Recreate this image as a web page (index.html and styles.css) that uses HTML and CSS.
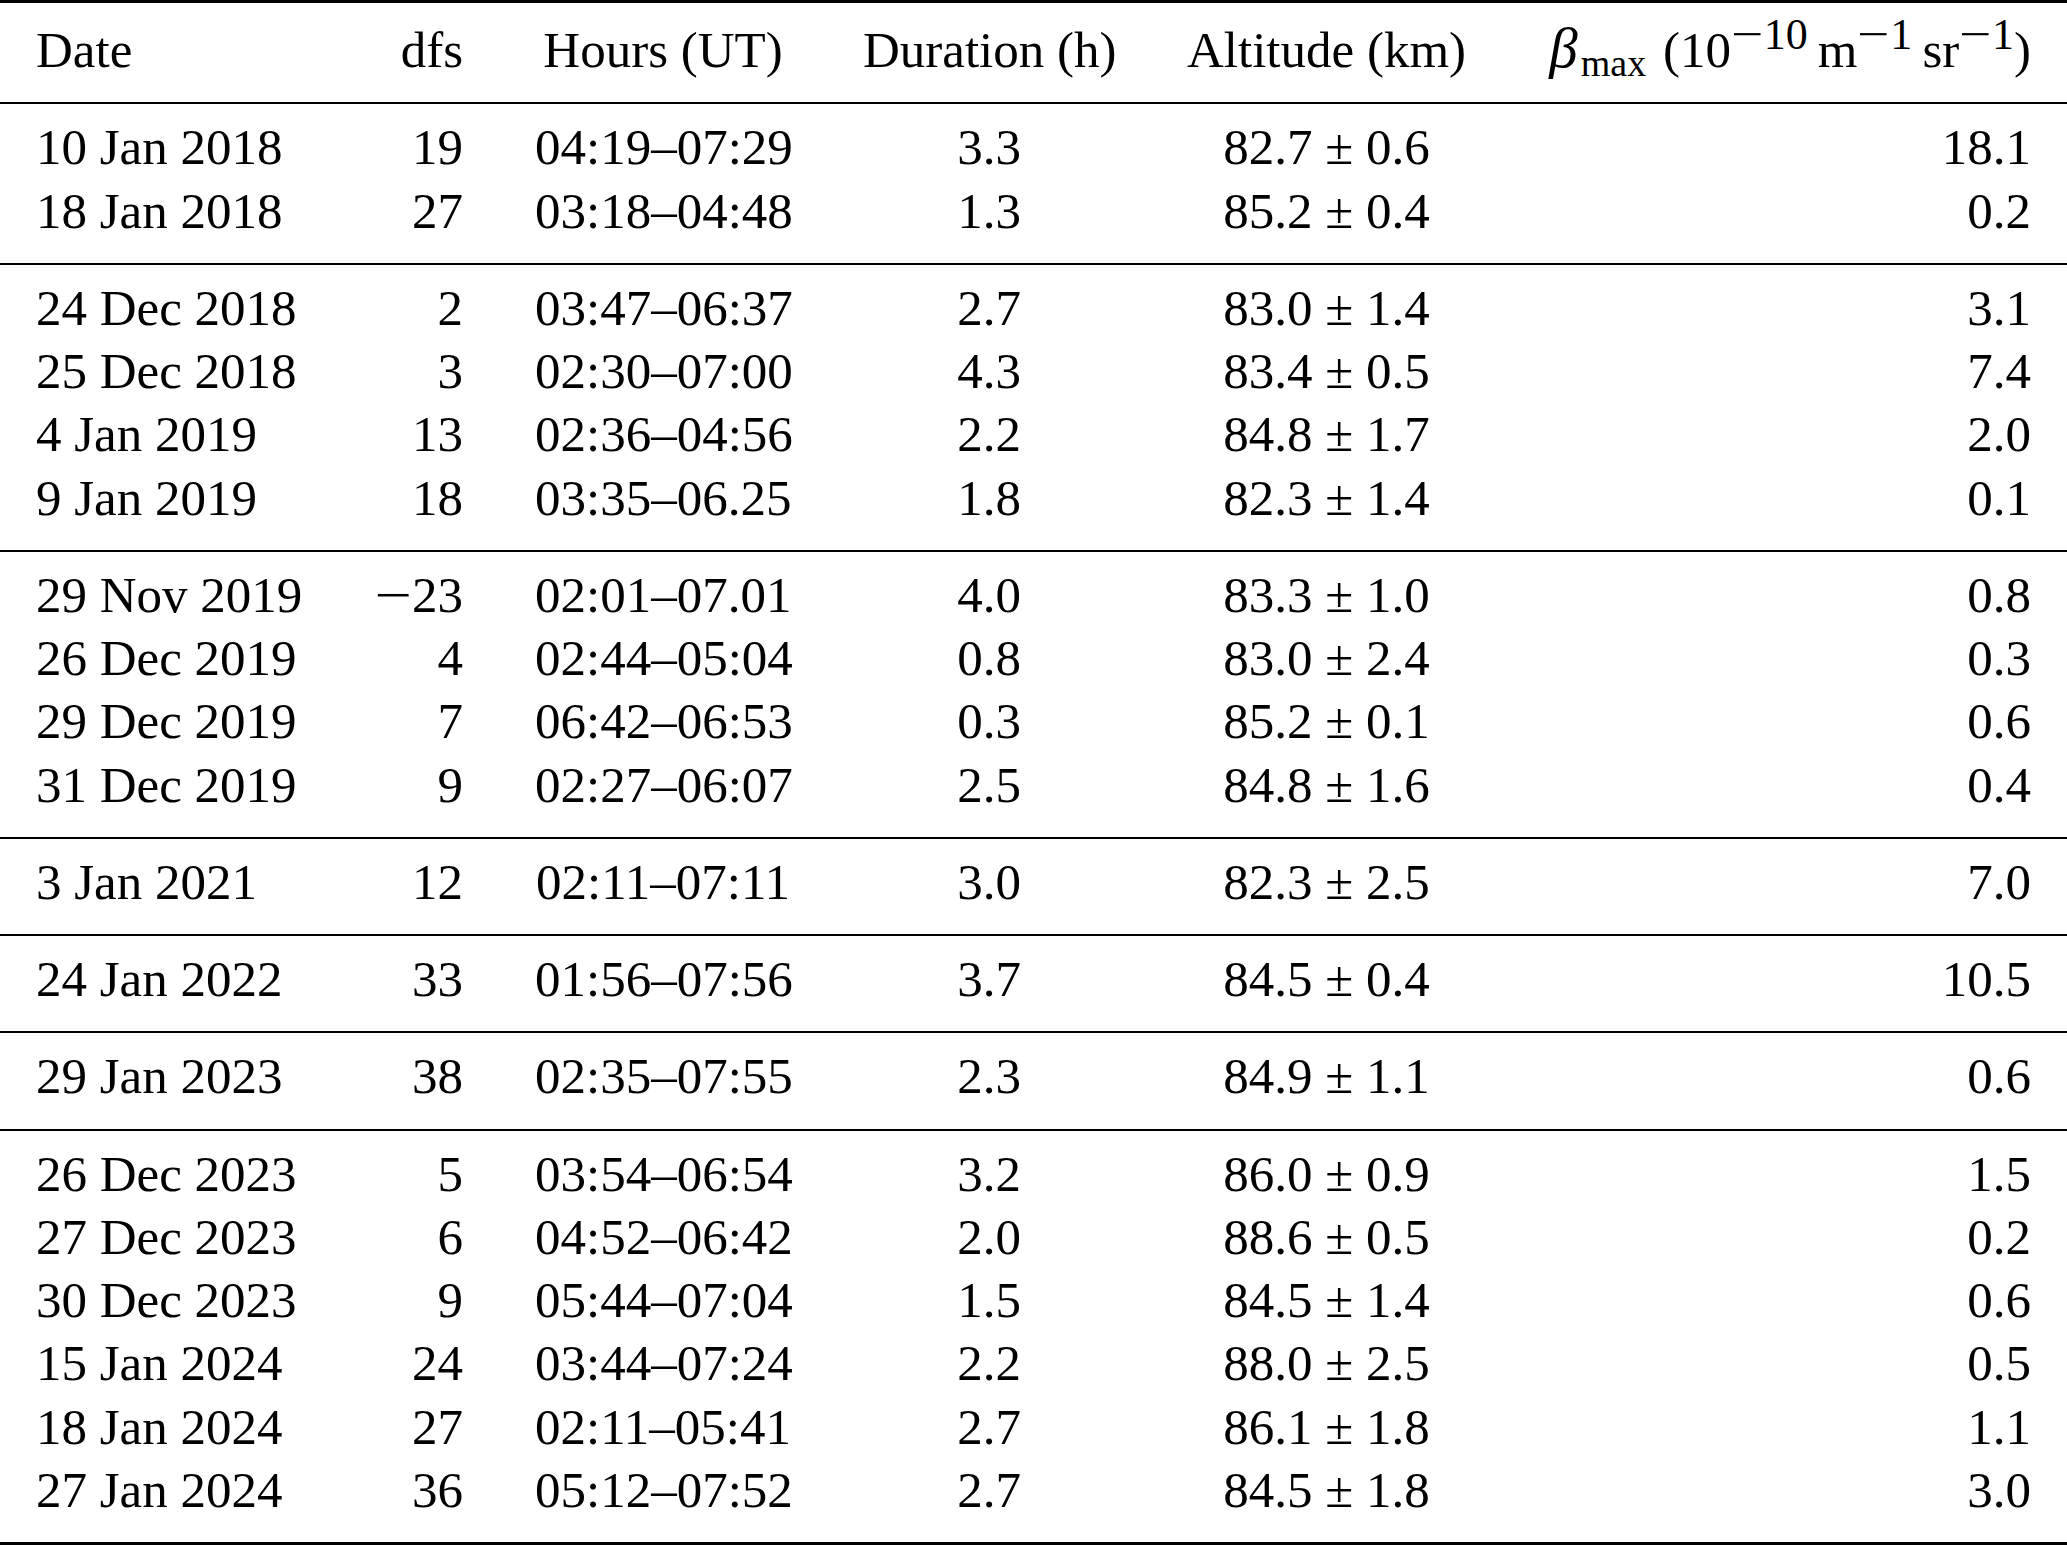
FILE: index.html
```html
<!DOCTYPE html>
<html lang="en">
<head>
<meta charset="utf-8">
<title>Table</title>
<link rel="stylesheet" href="styles.css">
</head>
<body>
<table class="data">
  <colgroup>
    <col class="c-date"><col class="c-dfs"><col class="c-hours"><col class="c-dur"><col class="c-alt"><col class="c-beta">
  </colgroup>
  <thead>
    <tr>
      <th class="l">Date</th>
      <th class="r">dfs</th>
      <th class="c">Hours (UT)</th>
      <th class="c">Duration (h)</th>
      <th class="c">Altitude (km)</th>
      <th class="r"><i class="beta">β</i><sub>max</sub> <span class="paren">(</span>10<sup><span class="minus">−</span>10</sup><span class="thin"></span>m<sup><span class="minus">−</span>1</sup><span class="thin"></span>sr<sup><span class="minus">−</span>1</sup>)</th>
    </tr>
  </thead>
  <tbody>
    <tr><td class="l">10 Jan 2018</td><td class="r">19</td><td class="c">04:19–07:29</td><td class="c">3.3</td><td class="c">82.7 ± 0.6</td><td class="r">18.1</td></tr>
    <tr><td class="l">18 Jan 2018</td><td class="r">27</td><td class="c">03:18–04:48</td><td class="c">1.3</td><td class="c">85.2 ± 0.4</td><td class="r">0.2</td></tr>
  </tbody>
  <tbody>
    <tr><td class="l">24 Dec 2018</td><td class="r">2</td><td class="c">03:47–06:37</td><td class="c">2.7</td><td class="c">83.0 ± 1.4</td><td class="r">3.1</td></tr>
    <tr><td class="l">25 Dec 2018</td><td class="r">3</td><td class="c">02:30–07:00</td><td class="c">4.3</td><td class="c">83.4 ± 0.5</td><td class="r">7.4</td></tr>
    <tr><td class="l">4 Jan 2019</td><td class="r">13</td><td class="c">02:36–04:56</td><td class="c">2.2</td><td class="c">84.8 ± 1.7</td><td class="r">2.0</td></tr>
    <tr><td class="l">9 Jan 2019</td><td class="r">18</td><td class="c">03:35–06.25</td><td class="c">1.8</td><td class="c">82.3 ± 1.4</td><td class="r">0.1</td></tr>
  </tbody>
  <tbody>
    <tr><td class="l">29 Nov 2019</td><td class="r"><span class="minus">−</span>23</td><td class="c">02:01–07.01</td><td class="c">4.0</td><td class="c">83.3 ± 1.0</td><td class="r">0.8</td></tr>
    <tr><td class="l">26 Dec 2019</td><td class="r">4</td><td class="c">02:44–05:04</td><td class="c">0.8</td><td class="c">83.0 ± 2.4</td><td class="r">0.3</td></tr>
    <tr><td class="l">29 Dec 2019</td><td class="r">7</td><td class="c">06:42–06:53</td><td class="c">0.3</td><td class="c">85.2 ± 0.1</td><td class="r">0.6</td></tr>
    <tr><td class="l">31 Dec 2019</td><td class="r">9</td><td class="c">02:27–06:07</td><td class="c">2.5</td><td class="c">84.8 ± 1.6</td><td class="r">0.4</td></tr>
  </tbody>
  <tbody>
    <tr><td class="l">3 Jan 2021</td><td class="r">12</td><td class="c">02:11–07:11</td><td class="c">3.0</td><td class="c">82.3 ± 2.5</td><td class="r">7.0</td></tr>
  </tbody>
  <tbody>
    <tr><td class="l">24 Jan 2022</td><td class="r">33</td><td class="c">01:56–07:56</td><td class="c">3.7</td><td class="c">84.5 ± 0.4</td><td class="r">10.5</td></tr>
  </tbody>
  <tbody>
    <tr><td class="l">29 Jan 2023</td><td class="r">38</td><td class="c">02:35–07:55</td><td class="c">2.3</td><td class="c">84.9 ± 1.1</td><td class="r">0.6</td></tr>
  </tbody>
  <tbody class="last">
    <tr><td class="l">26 Dec 2023</td><td class="r">5</td><td class="c">03:54–06:54</td><td class="c">3.2</td><td class="c">86.0 ± 0.9</td><td class="r">1.5</td></tr>
    <tr><td class="l">27 Dec 2023</td><td class="r">6</td><td class="c">04:52–06:42</td><td class="c">2.0</td><td class="c">88.6 ± 0.5</td><td class="r">0.2</td></tr>
    <tr><td class="l">30 Dec 2023</td><td class="r">9</td><td class="c">05:44–07:04</td><td class="c">1.5</td><td class="c">84.5 ± 1.4</td><td class="r">0.6</td></tr>
    <tr><td class="l">15 Jan 2024</td><td class="r">24</td><td class="c">03:44–07:24</td><td class="c">2.2</td><td class="c">88.0 ± 2.5</td><td class="r">0.5</td></tr>
    <tr><td class="l">18 Jan 2024</td><td class="r">27</td><td class="c">02:11–05:41</td><td class="c">2.7</td><td class="c">86.1 ± 1.8</td><td class="r">1.1</td></tr>
    <tr><td class="l">27 Jan 2024</td><td class="r">36</td><td class="c">05:12–07:52</td><td class="c">2.7</td><td class="c">84.5 ± 1.8</td><td class="r">3.0</td></tr>
  </tbody>
</table>
</body>
</html>
```
FILE: styles.css
```css
html, body {
  margin: 0;
  padding: 0;
  background: #ffffff;
}

body {
  font-family: "Liberation Serif", "Times New Roman", serif;
  color: #000000;
}

.data {
  border-collapse: separate;
  border-spacing: 0;
  table-layout: fixed;
  width: 2067px;
  font-size: 51px;
  line-height: 63.25px;
}

.c-date { width: 338px; }
.c-dfs { width: 161px; }
.c-hours { width: 328px; }
.c-dur { width: 324px; }
.c-alt { width: 351px; }
.c-beta { width: 565px; }

.data th,
.data td {
  padding: 0 36px;
  white-space: nowrap;
  vertical-align: baseline;
  font-weight: normal;
}

.data th {
  border-top: 3px solid #000;
  border-bottom: 2px solid #000;
  padding-top: 16px;
  padding-bottom: 20px;
}

.data tbody tr:first-child td {
  padding-top: 12px;
}

.data tbody tr:last-child td {
  padding-bottom: 20px;
}

.data tbody + tbody tr:first-child td {
  border-top: 2px solid #000;
}

.data tbody.last tr:last-child td {
  border-bottom: 3px solid #000;
}

.l { text-align: left; }
.r { text-align: right; }
.c { text-align: center; }

.beta {
  font-style: italic;
  font-size: 57px;
  line-height: 0;
  margin: 0 3px 0 6px;
}

.paren {
  margin-left: 4px;
}

sub {
  font-size: 38px;
  line-height: 0;
  vertical-align: -9px;
}

sup {
  font-size: 44px;
  line-height: 0;
  vertical-align: 18px;
}

.minus {
  display: inline-block;
  transform: scaleX(1.3);
  margin: 0 0.09em;
}

.thin {
  display: inline-block;
  width: 0.2em;
}
```
